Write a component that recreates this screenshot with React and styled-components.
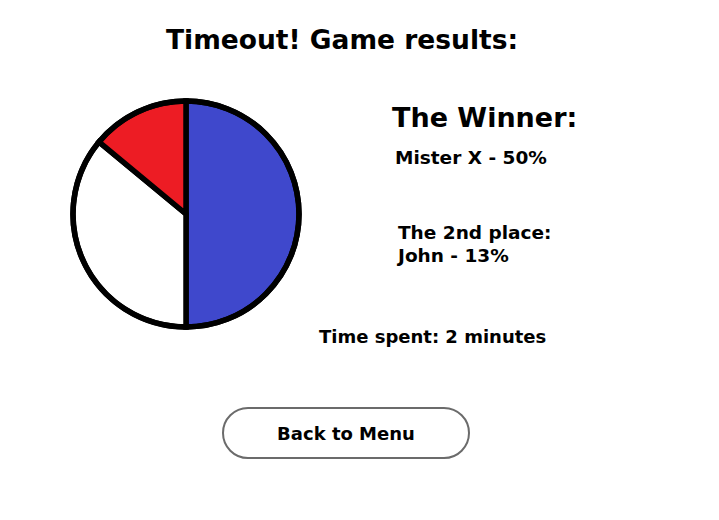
import React from "react";
import styled, { createGlobalStyle } from "styled-components";

const Global = createGlobalStyle`
  html, body { margin: 0; padding: 0; background: #fff; }
  body { font-family: "DejaVu Sans", Verdana, sans-serif; color: #000; }
`;

const Page = styled.div`
  width: 684px;
  height: 520px;
  display: flex;
  flex-direction: column;
  align-items: stretch;
`;

const Title = styled.h1`
  margin: 25px 0 0;
  font-size: 26.5px;
  font-weight: bold;
  text-align: center;
  line-height: 30px;
`;

const Content = styled.div`
  display: grid;
  grid-template-columns: 312px 1fr;
  margin-top: 43px;
`;

const PieWrap = styled.div`
  padding-left: 70px;
  svg { display: block; }
`;

const Info = styled.div`
  display: flex;
  flex-direction: column;
  align-items: flex-start;
  padding-top: 4px;
`;

const Heading = styled.h2`
  margin: 0 0 0 ${(p) => p.$indent || 0}px;
  font-size: 27px;
  font-weight: bold;
  line-height: 32px;
`;

const Line = styled.p`
  margin: ${(p) => p.$top || 0}px 0 0 ${(p) => p.$indent || 0}px;
  font-size: 18.5px;
  font-weight: bold;
  line-height: 23px;
`;

const TimeRow = styled.p`
  margin: -5px 0 0 319px;
  font-size: 18px;
  font-weight: bold;
  line-height: 23px;
`;

const ButtonRow = styled.div`
  display: flex;
  justify-content: center;
  padding-left: 8px;
  margin-top: 59px;
`;

const MenuButton = styled.button`
  width: 248px;
  height: 52px;
  border: 2px solid #6b6b6b;
  border-radius: 26px;
  background: #fff;
  font-family: "DejaVu Sans", Verdana, sans-serif;
  font-size: 18px;
  font-weight: bold;
  color: #000;
  cursor: pointer;
`;

function slicePath(cx, cy, r, a0, a1) {
  const p = (a) => [cx + r * Math.sin(a), cy - r * Math.cos(a)];
  const [x0, y0] = p(a0);
  const [x1, y1] = p(a1);
  const large = a1 - a0 > Math.PI ? 1 : 0;
  return `M${cx},${cy} L${x0},${y0} A${r},${r} 0 ${large} 1 ${x1},${y1} Z`;
}

const slices = [
  { share: 0.5, color: "#3f48cc" },
  { share: 0.36, color: "#ffffff" },
  { share: 0.14, color: "#ed1c24" },
];

function Pie() {
  const cx = 116, cy = 116, r = 113;
  let a = 0;
  return (
    <svg width="232" height="232" viewBox="0 0 232 232">
      {slices.map((s, i) => {
        const a0 = a;
        const a1 = a + s.share * Math.PI * 2;
        a = a1;
        return (
          <path
            key={i}
            d={slicePath(cx, cy, r, a0, a1)}
            fill={s.color}
            stroke="#000"
            strokeWidth="5.5"
            strokeLinejoin="miter"
          />
        );
      })}
      <circle cx={cx} cy={cy} r={r} fill="none" stroke="#000" strokeWidth="5.5" />
    </svg>
  );
}

export default function App() {
  return (
    <>
      <Global />
      <Page>
        <Title>Timeout! Game results:</Title>
        <Content>
          <PieWrap>
            <Pie />
          </PieWrap>
          <Info>
            <Heading $indent={80}>The Winner:</Heading>
            <Line $indent={83} $top={12}>Mister X - 50%</Line>
            <Line $indent={86} $top={52}>The 2nd place:<br />John - 13%</Line>
          </Info>
        </Content>
        <TimeRow>Time spent: 2 minutes</TimeRow>
        <ButtonRow>
          <MenuButton>Back to Menu</MenuButton>
        </ButtonRow>
      </Page>
    </>
  );
}
